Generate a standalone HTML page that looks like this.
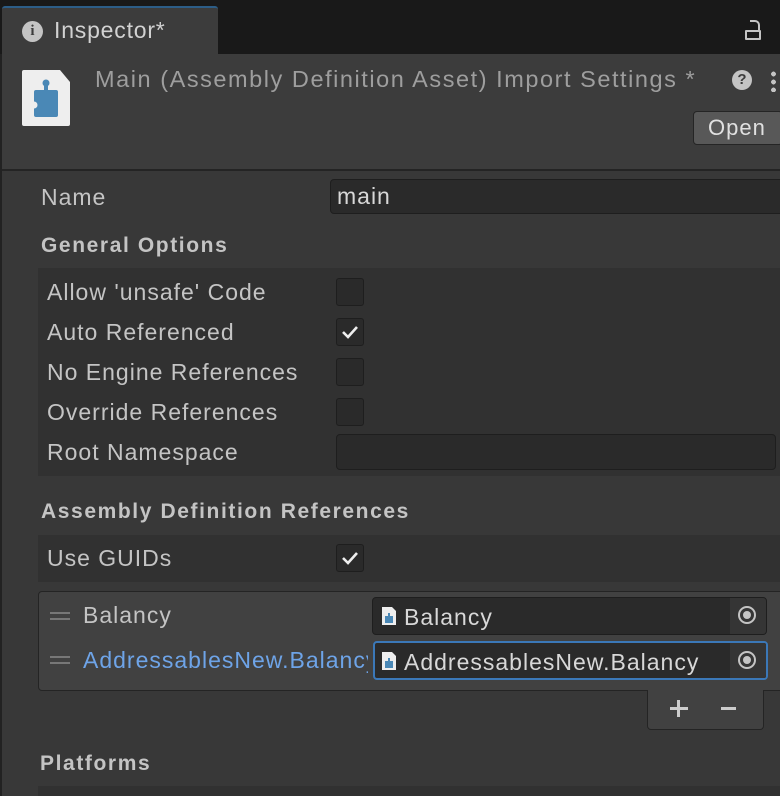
<!DOCTYPE html>
<html><head><style>
*{box-sizing:border-box;margin:0;padding:0}
body{width:780px;height:796px;background:#383838;font-family:"Liberation Sans",sans-serif;color:#c4c4c4;position:relative;overflow:hidden;font-size:23px;letter-spacing:1px}
.a{position:absolute;white-space:nowrap}
.cb{position:absolute;left:336px;width:28px;height:28px;background:#2a2a2a;border:1px solid #1e1e1e;border-radius:3px}
.lbl{position:absolute;left:47px;line-height:28px;white-space:nowrap}
.fld{position:absolute;background:#2a2a2a;border:1px solid #1e1e1e;border-radius:4px}
.h{font-weight:bold;font-size:21px;letter-spacing:1.6px}
</style></head><body>
<div class="a" style="left:0;top:0;width:780px;height:54px;background:#191919"></div>
<div class="a" style="left:2px;top:6px;width:216px;height:48px;background:#3c3c3c;border-top:2px solid #2c5d87;border-radius:3px 3px 0 0"></div>
<div class="a" style="left:22px;top:21px;width:21px;height:21px;border-radius:50%;background:#c4c4c4;color:#3c3c3c;font-size:15px;font-weight:bold;text-align:center;line-height:21px;font-family:'Liberation Serif',serif;letter-spacing:0">i</div>
<div class="a" style="left:54px;top:17px;font-size:23px;color:#d2d2d2;letter-spacing:0.8px">Inspector*</div>
<div class="a" style="left:745px;top:30px;width:16px;height:10px;border:2px solid #c4c4c4;border-radius:1px"></div>
<div class="a" style="left:750px;top:20px;width:10px;height:12px;border:2px solid #c4c4c4;border-bottom:none;border-left:none;border-radius:0 5px 0 0"></div>
<div class="a" style="left:0;top:54px;width:780px;height:117px;background:#3c3c3c;border-bottom:2px solid #242424"></div>
<div class="a" style="left:0;top:54px;width:2px;height:742px;background:#222"></div>
<svg class="a" style="left:22px;top:70px" width="48" height="56"><path d="M0 2 Q0 0 2 0 H38 L48 12 V54 Q48 56 46 56 H2 Q0 56 0 54Z" fill="#eee"/><rect x="12" y="20" width="24" height="27" rx="2" fill="#4a88b6"/><rect x="22" y="14" width="4" height="8" fill="#4a88b6"/><circle cx="24" cy="13" r="3.5" fill="#4a88b6"/><circle cx="12" cy="35" r="3.5" fill="#eee"/></svg>
<div class="a" style="left:95px;top:66px;font-size:23.5px;color:#9e9e9e;letter-spacing:1.55px">Main (Assembly Definition Asset) Import Settings *</div>
<div class="a" style="left:732px;top:70px;width:20px;height:20px;border-radius:50%;background:#c4c4c4;color:#3c3c3c;font-size:15px;font-weight:bold;text-align:center;line-height:20px;letter-spacing:0">?</div>
<div class="a" style="left:771px;top:70px;width:5px;height:22px;background:radial-gradient(circle,#c4c4c4 2.3px,transparent 2.5px) 0 0/5px 8px"></div>
<div class="a" style="left:693px;top:111px;width:90px;height:34px;background:#585858;border:1px solid #252525;border-radius:4px;color:#e0e0e0;font-size:22px;line-height:32px;padding-left:14px">Open</div>

<div class="a" style="left:41px;top:183px;line-height:28px">Name</div>
<div class="fld" style="left:330px;top:179px;width:460px;height:35px;color:#d8d8d8;padding-left:6px;line-height:33px">main</div>
<div class="a h" style="left:41px;top:232px;line-height:28px">General Options</div>
<div class="a" style="left:38px;top:268px;width:742px;height:208px;background:#313131"></div>
<div class="lbl" style="top:278px">Allow 'unsafe' Code</div>
<div class="lbl" style="top:318px">Auto Referenced</div>
<div class="lbl" style="top:358px">No Engine References</div>
<div class="lbl" style="top:398px">Override References</div>
<div class="lbl" style="top:438px">Root Namespace</div>
<div class="cb" style="top:278px"></div>
<div class="cb" style="top:318px"><svg width="26" height="26"><path d="M6 13 L11 18 L20 8" stroke="#eee" stroke-width="2.6" fill="none"/></svg></div>
<div class="cb" style="top:358px"></div>
<div class="cb" style="top:398px"></div>
<div class="fld" style="left:336px;top:434px;width:440px;height:36px"></div>
<div class="a h" style="left:41px;top:498px;line-height:28px">Assembly Definition References</div>
<div class="a" style="left:38px;top:535px;width:742px;height:47px;background:#313131"></div>
<div class="lbl" style="top:544px">Use GUIDs</div>
<div class="cb" style="top:544px"><svg width="26" height="26"><path d="M6 13 L11 18 L20 8" stroke="#eee" stroke-width="2.6" fill="none"/></svg></div>

<div class="a" style="left:38px;top:591px;width:750px;height:100px;background:#414141;border:1px solid #242424;border-radius:4px"></div>
<div class="a" style="left:50px;top:612px;width:20px;height:2px;background:#777;box-shadow:0 6px 0 #777"></div>
<div class="a" style="left:50px;top:656px;width:20px;height:2px;background:#777;box-shadow:0 6px 0 #777"></div>
<div class="a" style="left:83px;top:601px;line-height:28px">Balancy</div>
<div class="a" style="left:83px;top:646px;line-height:28px;color:#6ea4e8;width:285px;overflow:hidden">AddressablesNew.Balancy</div>
<div class="fld" style="left:372px;top:597px;width:395px;height:38px;overflow:hidden"><div class="a" style="right:0;top:0;width:36px;height:38px;background:#353535"></div></div>
<div class="fld" style="left:373px;top:641px;width:395px;height:39px;border:2px solid #3b78b8;overflow:hidden"><div class="a" style="right:0;top:0;width:36px;height:37px;background:#353535"></div></div>
<svg class="a" style="left:382px;top:607px" width="14" height="18"><path d="M0 0H10L14 4V18H0Z" fill="#eee"/><path d="M3 9H6V6H8V9H11V16H3Z" fill="#4a88b6"/></svg>
<svg class="a" style="left:382px;top:652px" width="14" height="18"><path d="M0 0H10L14 4V18H0Z" fill="#eee"/><path d="M3 9H6V6H8V9H11V16H3Z" fill="#4a88b6"/></svg>
<div class="a" style="left:404px;top:603px;line-height:28px;color:#d8d8d8">Balancy</div>
<div class="a" style="left:404px;top:648px;line-height:28px;color:#d8d8d8">AddressablesNew.Balancy</div>
<div class="a" style="left:738px;top:606px;width:18px;height:18px;border:2px solid #c4c4c4;border-radius:50%"><div style="margin:3px;width:8px;height:8px;border-radius:50%;background:#c4c4c4"></div></div>
<div class="a" style="left:738px;top:651px;width:18px;height:18px;border:2px solid #c4c4c4;border-radius:50%"><div style="margin:3px;width:8px;height:8px;border-radius:50%;background:#c4c4c4"></div></div>
<div class="a" style="left:647px;top:690px;width:117px;height:40px;background:#414141;border:1px solid #242424;border-top:none;border-radius:0 0 4px 4px"></div>
<div class="a" style="left:670px;top:707px;width:18px;height:3px;background:#ccc"></div>
<div class="a" style="left:677px;top:700px;width:3px;height:17px;background:#ccc"></div>
<div class="a" style="left:721px;top:707px;width:15px;height:3px;background:#ccc"></div>
<div class="a h" style="left:40px;top:750px;line-height:28px">Platforms</div>
<div class="a" style="left:38px;top:786px;width:742px;height:10px;background:#313131"></div>
</body></html>
